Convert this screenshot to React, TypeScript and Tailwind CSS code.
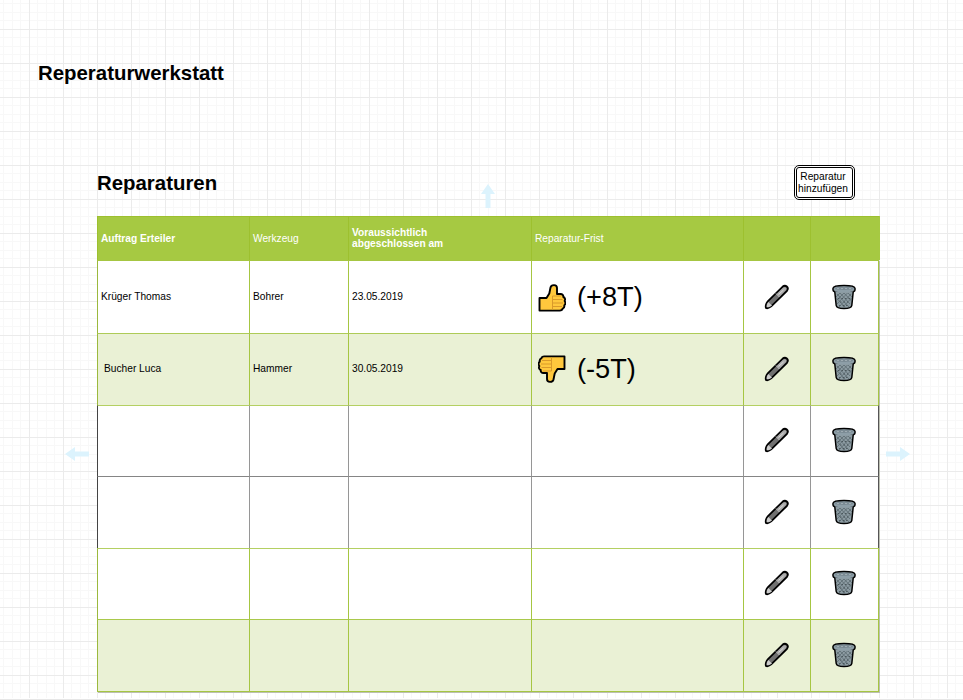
import React from "react";

function Grid() {
  return (
    <svg className="absolute inset-0 -z-10" width="963" height="700" shapeRendering="crispEdges" aria-hidden>
      <defs>
        <pattern id="paper" width="34" height="34" patternUnits="userSpaceOnUse">
          {[3, 12, 20].map((v) => (
            <g key={v} fill="#f8f8f8">
              <rect x={v} y="0" width="1" height="34" />
              <rect x="0" y={v} width="34" height="1" />
            </g>
          ))}
          <g fill="#ebebeb">
            <rect x="29" y="0" width="1" height="34" />
            <rect x="0" y="29" width="34" height="1" />
          </g>
        </pattern>
      </defs>
      <rect width="963" height="698" fill="url(#paper)" />
      <rect y="699" width="963" height="1" fill="#e6e6e6" />
    </svg>
  );
}

function Thumb({ down = false }: { down?: boolean }) {
  return (
    <svg width="28" height="28" viewBox="0 0 28 28" className={down ? "shrink-0 -scale-100" : "mt-[2px] shrink-0"} aria-hidden>
      <path
        d="M1.500 14H8.500L11.300 9.500 12.500 3.500C13.300.2 19 .2 19 4V10H22.500c2 0 3 1.500 2.800 3 1.800.6 2.200 2.500 1.300 4 1.300 1.500.9 3.400-.3 4.200.3 1.900-.4 3-1.600 3.400-.4 1.500-1.200 2-3 2H1.500z"
        fill="#ffc83d" stroke="#000" strokeWidth="1.900" strokeLinejoin="round"
      />
      <path d="M14.500 12V25.500M14.500 12H23M15 15.500h9.500M15 19h10M15 22.500h9" fill="none" stroke="#d99a2b" strokeWidth="1" />
    </svg>
  );
}

function Pen() {
  return (
    <svg width="26" height="26" viewBox="0 0 26 26" aria-hidden>
      <path d="M2 24c-.8-1.700.2-5 2-7L18.500 2.800c3-2.600 7 .5 4.500 4L9 20.700C7 22.700 4 25 2 24Z" fill="#707070" stroke="#000" strokeWidth="1.800" />
      <path d="m4.300 18 3.700 3.500c-2 1.500-3.500 2.200-5.200 1.700-.3-1.700.3-3.500 1.500-5.200Z" fill="#ccc" />
      <path d="m13 9.500 6-5.700c2-1.500 4.200.3 3 2.200l-6 6.200Z" fill="#aaa" />
      <path d="m12 9.500 3.500 3.500M14.500 10.500l5-4.500" stroke="#d8d8d8" strokeWidth="1" fill="none" />
    </svg>
  );
}

function Bin() {
  return (
    <svg width="24" height="26" viewBox="0 0 24 26" className="-ml-px" aria-hidden>
      <path d="M2.700 7 4.200 21.500Q4.700 24.600 12 24.600t7.800-3.100L21.300 7Z" fill="#8c9ba2" stroke="#000" strokeWidth="1.500" />
      <path d="m5 10 12 13M8 9l10 11M12 9l7.500 8M16 9l4 4M4.500 14l8.500 9M19 10 7 23M15.500 9 5 20M12 9l-7 7M8 9l-4 4M19.500 14 11 23" stroke="#5b6970" strokeWidth=".8" fill="none" />
      <path d="M7 21.500h10M8 18h8M6 14.500h12" stroke="#414c51" strokeWidth=".8" strokeDasharray="1.500 2" fill="none" />
      <path d="M1 6V4.200C1.300.6 22.700.6 23 4.200V6C22.700 9.200 1.300 9.200 1 6Z" fill="#8d9ea7" />
      <path d="M2.700 7.800C1.500 7.300 1 6.700 1 6V4.200C1.300.6 22.700.6 23 4.200V6c0 .7-.5 1.300-1.700 1.800" fill="none" stroke="#000" strokeWidth="1.500" />
      <ellipse cx="12" cy="4.400" rx="9" ry="1.700" fill="#7b8b94" />
      <path d="M5 4.500h14" stroke="#a8b5bb" strokeWidth=".8" strokeDasharray="2 2" />
    </svg>
  );
}

type Row = {
  name?: string;
  tool?: string;
  date?: string;
  due?: string;
  late?: boolean;
  tinted?: boolean;
  dark?: boolean;
  top: string;
  height: string;
  drop?: string;
};

const rows: Row[] = [
  { name: "Krüger Thomas", tool: "Bohrer", date: "23.05.2019", due: "(+8T)", top: "border-t-[#a6c642]", height: "h-[73px]", drop: "pb-0" },
  { name: "Bucher Luca", tool: "Hammer", date: "30.05.2019", due: "(-5T)", late: true, tinted: true, top: "border-t-[#aecb57]", height: "h-[72px]" },
  { dark: true, top: "border-t-[#b4d062]", height: "h-[71px]" },
  { dark: true, top: "border-t-[#858585]", height: "h-[72px]" },
  { top: "border-t-[#b4d062]", height: "h-[71px]" },
  { tinted: true, top: "border-t-[#a9c94b]", height: "h-[72px]" },
];

const columns = "grid grid-cols-[152px_99px_183px_212px_67px_69px]";
const cell = "flex items-center border-l border-t";

function TableRow({ row }: { row: Row }) {
  const drop = row.drop ?? "pb-[2px]";
  const side = row.dark ? "border-l-[#444]" : "border-l-[#9bb93d]";
  const c = `${cell} ${drop} ${row.dark ? "border-l-[#969696]" : "border-l-[#a6c642]"} ${row.top}`;
  const right = row.dark ? "border-r-[#555]" : "border-r-[#a6c642]";
  return (
    <div className={`${columns} ${row.height} ${row.tinted ? "bg-[#eaf1d5]" : "bg-white"}`}>
      <div className={`${cell} ${drop} ${side} ${row.top} ${row.late ? "pl-[6px]" : "pl-[3px]"}`}>{row.name}</div>
      <div className={`${c} pl-[3px]`}>{row.tool}</div>
      <div className={`${c} pl-[3px]`}>{row.date}</div>
      <div className={`${c} pl-[6px]`}>
        {row.due && (
          <>
            <Thumb down={row.late} />
            <span className="ml-[11px] text-[27.200px] leading-8">{row.due}</span>
          </>
        )}
      </div>
      <div className={`${c} justify-center`}><Pen /></div>
      <div className={`${c} justify-center border-r ${right}`}><Bin /></div>
    </div>
  );
}

function Arrow({ place }: { place: string }) {
  return (
    <svg className={`absolute ${place}`} width="24" height="14" viewBox="0 0 24 14" aria-hidden>
      <path d="M0 4.500h14V0l10 7-10 7V9.500H0Z" fill="#dcf3fd" />
    </svg>
  );
}

export default function App() {
  const head = `${cell} border-[#9dc02f] pl-[3px] pb-px`;
  return (
    <main className="relative isolate h-[700px] w-[963px] overflow-hidden bg-white font-['Liberation_Sans',Arial,sans-serif] text-black">
      <Grid />
      <h1 className="pl-[38px] pt-[61px] text-[20.400px] font-bold leading-6">Reperaturwerkstatt</h1>
      <section className="ml-[97px] mt-[80px] w-[783px]">
        <div className="flex h-[51px] items-start justify-between">
          <h2 className="pt-[6px] text-[20.400px] font-bold leading-6">Reparaturen</h2>
          <button className="mr-[25px] h-[35px] w-[61px] rounded-[5px] border-[3px] border-double border-black bg-white pr-[3px] text-[10.200px] leading-3">
            Reparatur<br />hinzufügen
          </button>
        </div>
        <div className={`${columns} h-[44px] w-[783px] bg-[#a6c942] text-[10.200px] leading-[11px] text-white`}>
          <div className={`${head} font-bold`}>Auftrag Erteiler</div>
          <div className={head}>Werkzeug</div>
          <div className={`${head} font-bold`}>Voraussichtlich<br />abgeschlossen am</div>
          <div className={head}>Reparatur-Frist</div>
          <div className={head} />
          <div className={head} />
        </div>
        <div className="w-[782px] border-b border-[#a6c642] text-[10.200px] shadow-[1px_1px_0_#bcbfb2]">
          {rows.map((row, i) => <TableRow key={i} row={row} />)}
        </div>
      </section>
      <Arrow place="left-[476px] top-[189px] -rotate-90" />
      <Arrow place="left-[65px] top-[447px] rotate-180" />
      <Arrow place="left-[886px] top-[447px]" />
    </main>
  );
}
